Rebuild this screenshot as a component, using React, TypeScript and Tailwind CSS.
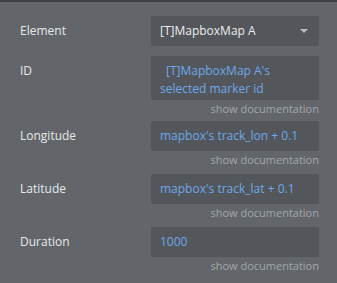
export default function App() {
  const rows = [
    { label: "Longitude", value: "mapbox's track_lon + 0.1" },
    { label: "Latitude", value: "mapbox's track_lat + 0.1" },
    { label: "Duration", value: "1000" },
  ];

  return (
    <div
      className="w-[337px] h-[283px] bg-[#62666a] border-t-2 border-[#3d4043] pl-[20px] pr-[18px] pt-[14px] text-[12px]"
      style={{ fontFamily: '"Open Sans", sans-serif' }}
    >
      {/* Element dropdown */}
      <div className="flex items-start">
        <div className="w-[131px] pt-[6px] leading-[18px] text-[#e8e8e8]">Element</div>
        <div className="w-[168px] h-[30px] bg-[#53575b] rounded-[2px] pl-[9px] pr-[11px] py-[6px] leading-[18px] flex items-center justify-between text-[#ececec]">
          <span>[T]MapboxMap A</span>
          <span className="w-0 h-0 border-l-[4px] border-r-[4px] border-t-[4px] border-l-transparent border-r-transparent border-t-[#b8bcc0]" />
        </div>
      </div>

      {/* ID */}
      <div className="flex items-start mt-[10px]">
        <div className="w-[131px] pt-[6px] leading-[18px] text-[#e8e8e8]">ID</div>
        <div className="w-[168px]">
          <div className="bg-[#53575b] rounded-[2px] pl-[9px] pr-[6px] pt-[6px] pb-[2px] leading-[18px] text-[#6ea7e9]">
            <span className="inline-block w-[6px]" />[T]MapboxMap A's selected marker id
          </div>
          <div className="text-right text-[11px] leading-[15px] pt-[1px] text-[#a3a7ab]">show documentation</div>
        </div>
      </div>

      {rows.map((r, i) => (
        <div key={r.label} className={`flex items-start ${i === 0 ? "mt-[5px]" : "mt-[7px]"}`}>
          <div className="w-[131px] pt-[6px] leading-[18px] text-[#e8e8e8]">{r.label}</div>
          <div className="w-[168px]">
            <div className="h-[30px] bg-[#53575b] rounded-[2px] pl-[9px] py-[6px] leading-[18px] text-[#6ea7e9]">
              {r.value}
            </div>
            <div className="text-right text-[11px] leading-[15px] pt-[1px] text-[#a3a7ab]">show documentation</div>
          </div>
        </div>
      ))}
    </div>
  );
}
